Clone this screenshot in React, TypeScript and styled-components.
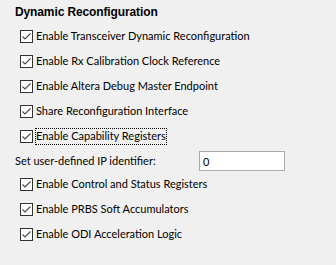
import React from "react";
import styled, { createGlobalStyle } from "styled-components";

const GlobalStyle = createGlobalStyle`
  html, body { margin: 0; padding: 0; background: #f0f0f0; }
  body { font-family: Lato, "Liberation Sans", sans-serif; font-size: 11px; color: #000; }
`;

const Panel = styled.div`
  display: flex;
  flex-direction: column;
  width: 336px;
  height: 265px;
  background: #f0f0f0;
`;

const Title = styled.div`
  height: 24px;
  display: flex;
  align-items: center;
  padding-left: 15px;
  font-family: "Liberation Sans", Arial, sans-serif;
  font-weight: 700;
  font-size: 12px;
  letter-spacing: -0.12px;
`;

const CheckRow = styled.label`
  height: 25px;
  display: flex;
  align-items: center;
  padding-left: 20px;
  gap: 2px;
  white-space: nowrap;
`;

const Box = styled.span`
  width: 13px;
  height: 13px;
  box-sizing: border-box;
  border: 1px solid #333333;
  background: #ffffff;
  display: flex;
  align-items: center;
  justify-content: center;
  flex: none;
`;

const Label = styled.span<{ $focused?: boolean }>`
  padding: 1px 1px 2px 1px;
  line-height: 14px;
  outline: ${(p) => (p.$focused ? "1px dotted #000" : "none")};
  outline-offset: -1px;
`;

const FieldRow = styled.div`
  height: 23px;
  display: flex;
  align-items: center;
  padding-left: 15px;
  white-space: nowrap;
`;

const FieldLabel = styled.span`
  width: 184px;
  line-height: 14px;
`;

const Input = styled.div`
  width: 86px;
  height: 20px;
  box-sizing: border-box;
  border: 1px solid #ababab;
  background: #ffffff;
  display: flex;
  align-items: center;
  padding-left: 3px;
  margin-top: 1px;
`;

function Check() {
  return (
    <svg width="11" height="11" viewBox="0 0 11 11">
      <path d="M1.5 5.5 L4 8 L9.5 2.5" fill="none" stroke="#4a4a4a" strokeWidth="1.1" />
    </svg>
  );
}

function CheckItem({ label, focused }: { label: string; focused?: boolean }) {
  return (
    <CheckRow>
      <Box>
        <Check />
      </Box>
      <Label $focused={focused}>{label}</Label>
    </CheckRow>
  );
}

export default function App() {
  return (
    <>
      <GlobalStyle />
      <Panel>
        <Title>Dynamic Reconfiguration</Title>
        <CheckItem label="Enable Transceiver Dynamic Reconfiguration" />
        <CheckItem label="Enable Rx Calibration Clock Reference" />
        <CheckItem label="Enable Altera Debug Master Endpoint" />
        <CheckItem label="Share Reconfiguration Interface" />
        <CheckItem label="Enable Capability Registers" focused />
        <FieldRow>
          <FieldLabel>Set user-defined IP identifier:</FieldLabel>
          <Input>0</Input>
        </FieldRow>
        <CheckItem label="Enable Control and Status Registers" />
        <CheckItem label="Enable PRBS Soft Accumulators" />
        <CheckItem label="Enable ODI Acceleration Logic" />
      </Panel>
    </>
  );
}
